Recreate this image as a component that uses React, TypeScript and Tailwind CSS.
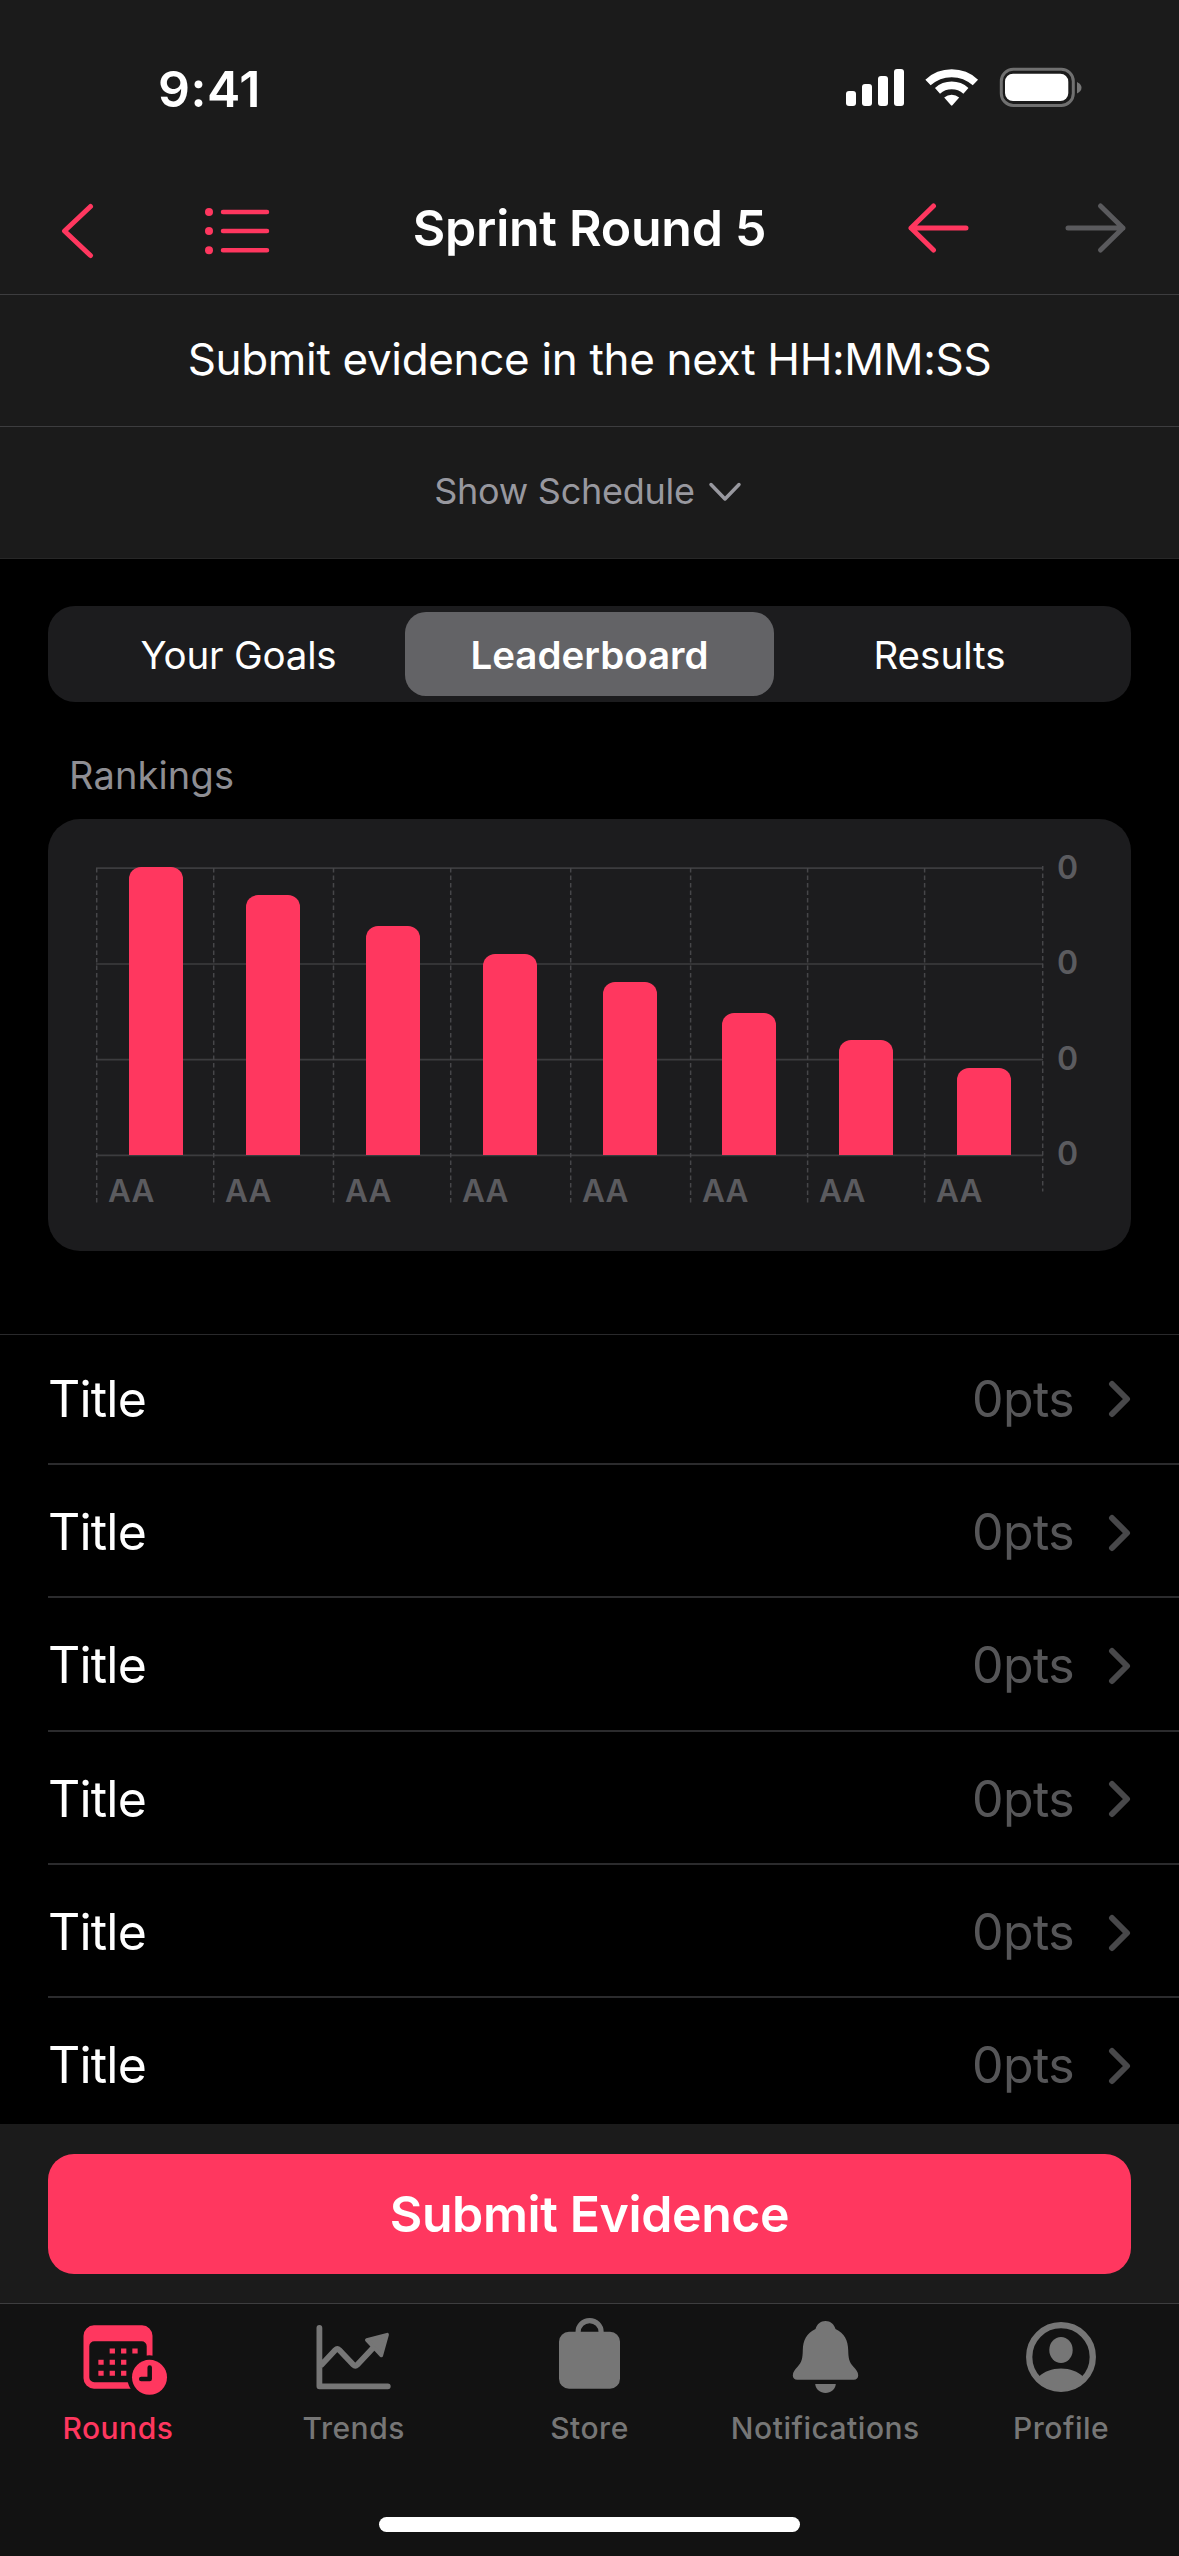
const bars = [
  { col: "w-[117px]", bar: "ml-[33px] h-[288px]" },
  { col: "w-[120px]", bar: "ml-[33px] h-[260px]" },
  { col: "w-[117px]", bar: "ml-[33px] h-[229px]" },
  { col: "w-[120px]", bar: "ml-[33px] h-[201px]" },
  { col: "w-[120px]", bar: "ml-[33px] h-[173px]" },
  { col: "w-[117px]", bar: "ml-[32px] h-[142px]" },
  { col: "w-[117px]", bar: "ml-[32px] h-[115px]" },
  { col: "w-[118px]", bar: "ml-[33px] h-[87px]" },
];

const rows = [1, 2, 3, 4, 5, 6];

const StatusBar = () => (
  <div className="flex h-[171px] justify-between pl-[158px] pr-[97px]">
    <span className="mt-[58px] h-[62px] text-[50px] leading-[62px] font-semibold tracking-[0.5px]">
      9:41
    </span>
    <svg className="mt-[67px]" width="236" height="41" viewBox="846 67 236 41">
      <g fill="#fff">
        <rect x="846" y="91" width="10" height="15" rx="3" />
        <rect x="862" y="84" width="10" height="22" rx="3" />
        <rect x="878" y="76" width="10" height="30" rx="3" />
        <rect x="894" y="69" width="10" height="37" rx="3" />
      </g>
      {/* wifi */}
      <path d="M928 82.500a35 35 0 0 1 47.400 0" fill="none" stroke="#fff" strokeWidth="7.800" />
      <path d="M937.500 90.800a21.400 21.400 0 0 1 28.400 0" fill="none" stroke="#fff" strokeWidth="7.600" />
      <path d="M944.200 97.500a11.500 11.500 0 0 1 15 0l-6.800 7.800q-.700.700-1.400 0z" fill="#fff" />
      {/* battery */}
      <rect x="1001.300" y="69.200" width="72" height="36.200" rx="12" fill="none" stroke="#707070" strokeWidth="3" />
      <rect x="1005" y="73.700" width="63.300" height="27.300" rx="8" fill="#fff" />
      <path d="M1077 82v11.500q4.500-2 4.500-5.700t-4.500-5.800z" fill="#767676" />
    </svg>
  </div>
);

const NavBar = () => (
  <div className="flex h-[123px] items-start justify-between pl-[60px] pr-[50px]">
    <div className="flex w-[355px] gap-[110px] pt-[31px]">
      <svg width="35" height="60" viewBox="0 0 35 60" fill="none" stroke="#ff375f" strokeWidth="5" strokeLinecap="round" strokeLinejoin="round">
        <path d="M30.500 4.500L4.500 29L30.500 53.500" />
      </svg>
      <svg className="mt-[5px]" width="66" height="50" viewBox="0 0 66 50">
        <g fill="#ff375f">
          <circle cx="4" cy="5" r="4" />
          <circle cx="4" cy="24" r="4" />
          <circle cx="4" cy="43.300" r="4" />
        </g>
        <path d="M18 5h44M18 24h44M18 43.300h44" stroke="#ff375f" strokeWidth="4.500" strokeLinecap="round" />
      </svg>
    </div>
    <h1 className="mt-[26px] whitespace-nowrap text-[50px] leading-[62px] font-semibold tracking-[-0.250px]">
      Sprint Round 5
    </h1>
    <div className="flex w-[365px] justify-end gap-[93px] pt-[30px]">
      <svg width="64" height="54" viewBox="0 0 64 54" fill="none" stroke="#ff375f" strokeWidth="5" strokeLinecap="round" strokeLinejoin="round">
        <path d="M58 27H3M25.500 5L3 27L25.500 49" />
      </svg>
      <svg width="64" height="54" viewBox="0 0 64 54" fill="none" stroke="#5a5a5d" strokeWidth="5" strokeLinecap="round" strokeLinejoin="round">
        <path d="M3 27H58M35.500 5L58 27L35.500 49" />
      </svg>
    </div>
  </div>
);

const RankingsChart = () => (
  <div className="relative h-[432px] rounded-[32px] bg-[#1c1c1e]">
    {/* grid */}
    <svg className="absolute inset-0" width="1083" height="432" viewBox="48 819 1083 432" fill="none" stroke="#3c3c3f">
      <path d="M96 868.200H1043M96 964H1043M96 1059.700H1043M96 1155.400H1043" strokeWidth="1.700" />
      <path
        d="M96.700 868V1202.500M213.700 868V1202.500M333.500 868V1202.500M450.700 868V1202.500M570.700 868V1202.500M690.600 868V1202.500M807.600 868V1202.500M924.600 868V1202.500M1042.700 866V1191.500"
        strokeWidth="1.500"
        strokeDasharray="4.500 3"
        stroke="#464649"
      />
    </svg>
    {/* bars with their labels */}
    <div className="relative flex h-full pl-[48px] pt-[48px]">
      {bars.map((item, i) => (
        <div key={i} className={`${item.col} shrink-0`}>
          <div className="flex h-[288px] items-end">
            <div className={`${item.bar} w-[54px] rounded-t-[12px] bg-[#ff375f]`}></div>
          </div>
          <div className="mt-[16px] pl-[12px] text-[31.500px] leading-[40px] font-semibold text-[#5b5b5f]">
            AA
          </div>
        </div>
      ))}
      <div className="-mt-[19px] ml-[15px] flex flex-col text-[32px] leading-[40px] font-semibold text-[#5b5b5f]">
        <span className="h-[95.400px]">0</span>
        <span className="h-[95.400px]">0</span>
        <span className="h-[95.400px]">0</span>
        <span>0</span>
      </div>
    </div>
  </div>
);

const RoundsIcon = () => (
  <svg width="86" height="80" viewBox="75 2315 86 80" overflow="visible">
    <mask id="clock-cut" maskUnits="userSpaceOnUse" x="75" y="2315" width="100" height="80">
      <rect x="75" y="2315" width="100" height="80" fill="#fff" />
      <circle cx="149.300" cy="2377.300" r="22" fill="#000" />
    </mask>
    <g mask="url(#clock-cut)" fill="currentColor">
      <path
        fillRule="evenodd"
        d="M94 2325.300h48a10.500 10.500 0 0 1 10.500 10.500v42.400a10.500 10.500 0 0 1-10.500 10.500h-48a10.500 10.500 0 0 1-10.500-10.500v-42.400a10.500 10.500 0 0 1 10.500-10.500zM94.300 2341.300a5 5 0 0 0-5 5v31a5 5 0 0 0 5 5h47.400a5 5 0 0 0 5-5v-31a5 5 0 0 0-5-5z"
      />
      <path
        d="M112.300 2348.500v5M123.700 2348.500v5M135 2348.500v5M101 2359.700v5M112.300 2359.700v5M123.700 2359.700v5M101 2370.800v5M112.300 2370.800v5M123.700 2370.800v5"
        stroke="currentColor"
        strokeWidth="5.300"
      />
    </g>
    <circle cx="149.500" cy="2377.300" r="17.500" fill="currentColor" />
    <path d="M149.700 2367.500v11.500h-8.500" fill="none" stroke="#121212" strokeWidth="4.500" strokeLinecap="round" strokeLinejoin="round" />
  </svg>
);

const TrendsIcon = () => (
  <svg width="80" height="80" viewBox="314.200 2315 80 80" fill="none" stroke="currentColor" strokeLinecap="round" strokeLinejoin="round">
    <path d="M319.600 2328v58.300H388M321.500 2365L335.500 2350q2-2 4 0l14 14.700q2 2 4 0L376 2345" strokeWidth="5.800" />
    <path d="M367 2340L387.300 2334.700L381.500 2355.500z" fill="currentColor" strokeWidth="3.600" />
  </svg>
);

const StoreIcon = () => (
  <svg width="80" height="80" viewBox="549.500 2315 80 80">
    <rect x="559.500" y="2331.700" width="61" height="57" rx="10" fill="currentColor" />
    <path d="M578.600 2333v-1a11.500 11.400 0 0 1 23 0v1" fill="none" stroke="currentColor" strokeWidth="5.200" />
  </svg>
);

const BellIcon = () => (
  <svg width="80" height="80" viewBox="785.300 2315 80 80" fill="currentColor">
    <path d="M825.800 2321c5 0 8.500 3 10 8 9 4 12.500 11.500 12.700 21 .200 8.500 1 12 5 16.500 3 3.300 5 5.500 5 9 0 2.500-1.700 4.200-4.500 4.200h-56.400c-2.800 0-4.500-1.700-4.500-4.200 0-3.500 2-5.700 5-9 4-4.500 4.800-8 5-16.500.200-9.500 3.700-17 12.700-21 1.500-5 5-8 10-8z" />
    <path d="M815.500 2384h20.600c-.500 5.500-5 9-10.300 9s-9.800-3.500-10.300-9z" />
  </svg>
);

const ProfileIcon = () => (
  <svg width="80" height="80" viewBox="1021 2315 80 80">
    <circle cx="1061" cy="2357" r="31.800" fill="none" stroke="currentColor" strokeWidth="6.300" />
    <ellipse cx="1061" cy="2350" rx="11.700" ry="13" fill="currentColor" />
    <path d="M1039 2376.500c5-5 13-8 22-8s17 3 22 8l3 1c-5 8-14 13.500-25 13.500s-20-5.500-25-13.500z" fill="currentColor" />
  </svg>
);

const tabs = [
  { label: "Rounds", icon: <RoundsIcon />, color: "text-[#ff375f]" },
  { label: "Trends", icon: <TrendsIcon />, color: "text-[#767676]" },
  { label: "Store", icon: <StoreIcon />, color: "text-[#767676]" },
  { label: "Notifications", icon: <BellIcon />, color: "text-[#767676]" },
  { label: "Profile", icon: <ProfileIcon />, color: "text-[#767676]" },
];

const App = () => {
  return (
    <div className="flex h-[2556px] w-[1179px] flex-col overflow-hidden bg-black font-['Inter',sans-serif] text-white">
      {/* Header */}
      <header className="h-[559px] shrink-0 border-b border-[#272727] bg-[#1b1b1b]">
        <StatusBar />
        <NavBar />
        <div className="h-[132px] border-t border-[#3d3d3f] pt-[37px] text-center text-[44px] leading-[54px] tracking-[-0.330px]">
          Submit evidence in the next HH:MM:SS
        </div>
        <div className="flex h-[132px] justify-center gap-[13px] border-t border-[#3d3d3f] pt-[41px] pr-[3px] text-[36px] leading-[46px] tracking-[-0.250px] text-[#98989f]">
          <span>Show Schedule</span>
          <svg className="mt-[13px]" width="34" height="22" viewBox="0 0 34 22" fill="none" stroke="currentColor" strokeWidth="3.500" strokeLinecap="round" strokeLinejoin="round">
            <path d="M3 3.500L17 18L31 3.500" />
          </svg>
        </div>
      </header>

      <main className="h-[1565px] shrink-0 overflow-hidden">
        <div className="px-[48px] pt-[47px]">
          {/* Segmented control */}
          <div className="flex h-[96px] items-center rounded-[27px] bg-[#1c1c1e] p-[6px] text-[38.500px]">
            <div className="w-[351px] pt-[3px] pl-[18px] text-center tracking-[-0.200px]">Your Goals</div>
            <div className="flex h-[84px] w-[369px] items-center justify-center rounded-[21px] bg-[#636366] pt-[3px] font-semibold">
              Leaderboard
            </div>
            <div className="w-[351px] pt-[3px] pr-[20px] text-center">Results</div>
          </div>
          <h2 className="mt-[49px] h-[68px] pl-[21px] text-[38px] leading-[48px] tracking-[0.150px] text-[#8e8e93]">
            Rankings
          </h2>
          <RankingsChart />
        </div>

        {/* Standings */}
        <ul className="mt-[83px] border-t border-[#29292b]">
          {rows.map((row) => (
            <li key={row} className="ml-[48px] flex h-[133.300px] items-center justify-between border-b-2 border-[#2b2b2d] pt-[4px] pr-[48px] text-[50px] first:h-[130px] first:pt-0">
              <span className="tracking-[-0.800px]">Title</span>
              <span className="flex items-center gap-[33px] tracking-[-0.600px] text-[#565658]">
                0pts
                <svg width="24" height="40" viewBox="0 0 24 40" fill="none" stroke="#48484a" strokeWidth="6" strokeLinecap="round" strokeLinejoin="round">
                  <path d="M5 5L20 20L5 35" />
                </svg>
              </span>
            </li>
          ))}
        </ul>
      </main>

      {/* Submit */}
      <div className="h-[179px] shrink-0 bg-[#1b1b1b] px-[48px] pt-[30px]">
        <button className="h-[120px] w-full rounded-[26px] bg-[#ff375f] text-[50px] font-semibold tracking-[-0.400px]">
          Submit Evidence
        </button>
      </div>

      {/* Tab bar */}
      <nav className="flex h-[253px] shrink-0 flex-col items-center border-t border-[#3d3d3f] bg-[#121212]">
        <div className="grid w-full grid-cols-5 pt-[11px]">
          {tabs.map((tab) => (
            <div key={tab.label} className={`flex flex-col items-center ${tab.color}`}>
              {tab.icon}
              <span className="mt-[14px] text-[30px] leading-[38px] font-medium tracking-[0.500px]">
                {tab.label}
              </span>
            </div>
          ))}
        </div>
        <div className="mt-[70px] h-[15px] w-[421px] rounded-full bg-white"></div>
      </nav>
    </div>
  );
};

export default App;
